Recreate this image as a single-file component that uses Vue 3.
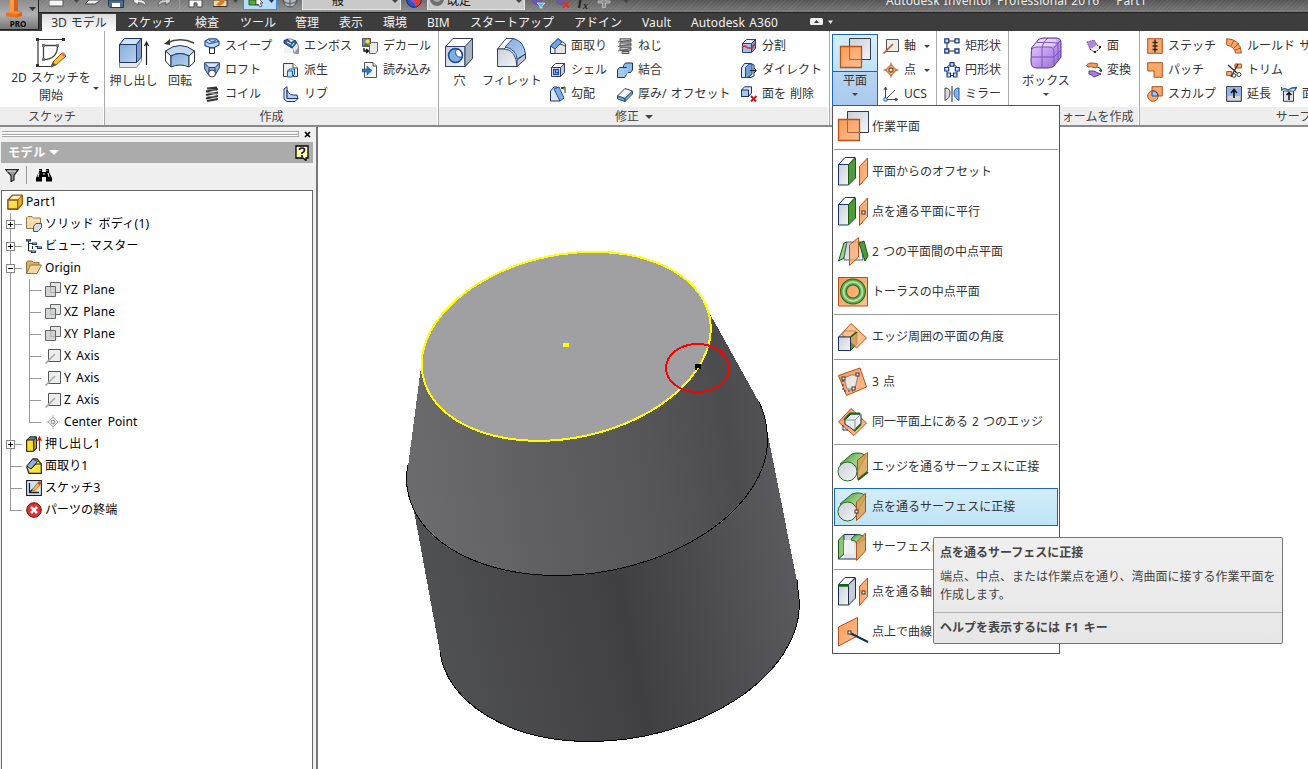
<script setup>
const O = 'fill="#fba96b" stroke="#b5521b"'
const N = 'stroke="#1d3566"'
const cube = (front, top, side, stroke) => `<g stroke="${stroke}" stroke-linejoin="round"><path d="M1.5 5.500H10.500V14.500H1.500Z" fill="${front}"/><path d="M1.500 5.500L5.500 1.500H14.500L10.500 5.500Z" fill="${top}"/><path d="M10.500 5.500L14.500 1.500V10.500L10.500 14.500Z" fill="${side}"/></g>`
const planeSmall = `<path d="M5.500.5h10v10h-10z" fill="#e4e5e6" stroke="#666"/><path d="M.5 4.500h10v10H.5z" fill="#c9cacb" fill-opacity=".8" stroke="#666"/>`
const axis = (c) => `<path d="M3.500 1.500h12v12h-12z" fill="#eceded" stroke="#555"/><path d="M.5 15.500L10 6" stroke="${c}" stroke-width="1.600"/>`
const bigPlane = `<path d="M10.500.5h21v21h-21z" fill="url(#gGray)" stroke="#333a4a"/><path d="M1.500 8.500h21v21h-21z" fill="url(#gOr)" stroke="#b5521b" stroke-width="1.300"/><path d="M10.500 9v12.500H22" fill="none" stroke="#b0623a"/>`
const box3 = (side) => `<path d="M1.500 8.500L8 1.500H18L11.500 8.500Z" fill="#fff" ${N}/><path d="M1.500 8.500h10v20.500h-10z" fill="url(#gGray)" ${N}/><path d="M11.500 8.500L18.500 2V22L11.500 29Z" fill="${side}" stroke="#1a5a12"/>`
const slab = `<path d="M22.500 10.500L30.500 2V20.500L22.500 29.500Z" fill="url(#gOr)" stroke="#b5521b"/>`
const dot = (x, y) => `<rect x="${x}" y="${y}" width="3" height="3" fill="#fff" stroke="#333"/>`
const cyl = `<path d="M3 13L15 3Q23 0 29 5L18 25Z" fill="url(#gGreen)" stroke="#1a6a12"/><circle cx="10.500" cy="20.500" r="9.500" fill="url(#gGray)" stroke="#2a6a20"/>`

const icons = {
  sketch: `<path d="M3 3V29M2 2.500H29M3 29.500H17" fill="none" stroke="#333" stroke-width="1.200"/><g fill="#333"><path d="M1 1h3v3H1zM27 1h3v3h-3zM1 27h3v3H1z"/></g><path d="M8.500 8.500h14M8.500 8.500v14c9 0 14-5 14-14" fill="none" stroke="#444" stroke-width="1.300"/><g fill="#777"><path d="M7 7h3v3H7zM21 7h3v3h-3zM7 21h3v3H7z"/></g><path d="M18 25L27 16L31 19L21 28L16 30Z" fill="#f6c23c" stroke="#8a5a10"/><path d="M16 30l2-5 3 3z" fill="#555"/><path d="M26 17l2-2 3 3-2 2z" fill="#e66"/>`,
  extrude: `<path d="M1.500 7.500L6.500 1.500H23.500V24L18.500 30.500H1.500Z" fill="#e6e8ea" stroke="#8a909c"/><path d="M1.500 7.500H18.500V25.500H1.500Z" fill="url(#gBlue)" ${N}/><path d="M1.500 7.500L6.500 1.500H23.500L18.500 7.500Z" fill="#d3e3f6" ${N}/><path d="M18.500 7.500L23.500 1.500V20L18.500 25.500Z" fill="#7f9fcb" ${N}/><path d="M28.500 28V6M26.500 9L28.500 5L30.500 9" fill="none" stroke="#222" stroke-width="1.200"/>`,
  revolve: `<path d="M1.500 14Q16 3 30.500 14L25 19Q16 14 7 19Z" fill="#c3d8f0" ${N}/><path d="M1.500 14L7 19V30L1.500 24Z" fill="#fff" stroke="#333"/><path d="M7 19Q16 14 25 19V30Q16 26 7 30Z" fill="url(#gBlue)" ${N}/><path d="M25 19L30.500 14V25L25 30Z" fill="#fff" stroke="#333"/><path d="M3 6Q16-.5 30 6" fill="none" stroke="#444" stroke-width="1.600"/><path d="M0 7l6-5v6z" fill="#333"/>`,
  sweep: `<path d="M1 6V3L5 .8H12L15 3.500V7L9.500 10L6 9.500L1 7.500Z" fill="#c3d9f2" stroke="#1c4b98" stroke-width="1.200"/><path d="M1.500 3.500Q5 7 9 5L14.500 3.500M5 2L8 4L12 2.500" fill="none" stroke="#1c4b98"/><path d="M5.500 10h5v5.500h-5z" fill="#fff" stroke="#223"/>`,
  loft: `<path d="M.7.7h14.600v5L11 13.500H5L.7 7Z" fill="#8eb3df" ${N}/><path d="M1 1.500l4 4h6l4-4" fill="#d8e6f5" ${N}/><path d="M5 6v4M11 6v4" ${N}/><circle cx="8" cy="11.500" r="3.500" fill="#fff" stroke="#334"/>`,
  coil: `<path d="M3 2.500l10-1M2 5.500l12-2.500M2 9l12-2.500M2 12.500l12-2.500M3 15l11-2" stroke="#333" stroke-width="1.800"/><path d="M3 3l10 1.500M3 6.500l10 1.500M3 10l10 1.500" stroke="#888"/>`,
  emboss: `<path d="M3 1H8Q15 3 15.500 9V15.500L11 15Q10 8 3 6Z" fill="#e7e9ec" stroke="#888"/><path d="M10 15Q11 9 4 7H1V15.500z" fill="#f1f2f4"/><path d="M1 2.500L5 1.500L8 5L12 2L13.500 5L9 10L1 5Z" fill="#2c6cb8" ${N}/><path d="M4 4l4 2M11 5L9 8" stroke="#fff"/><path d="M15.500 9v6.500H11z" fill="#8b97aa"/>`,
  derive: `<path d="M.5 14.500V1.500H10L14.500 6V14.500Z" fill="#eee" stroke="#444"/><path d="M10 1.500V6h4.500" fill="#fff" stroke="#444"/><path d="M4.500 9L6.500 7H11.500V12L9.500 15H4.500Z" fill="#bfe0fa" stroke="#1c5ea8"/><path d="M4.500 9h5v5" fill="none" stroke="#1c5ea8"/>`,
  rib: `<path d="M1 3L4 .7V12L15 12.500L12 15.500H4L1 13Z" fill="#d7e5f5" ${N}/><path d="M4 4Q6 10 14 9L15 12.500H4Z" fill="#b5d1ef" ${N}/>`,
  decal: `<path d="M.5.5h8v8h-8z" fill="#6d8db0" stroke="#555"/><circle cx="5.500" cy="3.500" r="2" fill="#ffe33a"/><path d="M1 8l3-3 4 3z" fill="#4d7a36"/><path d="M7.500 6.500L9.500 4.500H15.500V13L13.500 15.500H7.500Z" fill="#e8e8e8" stroke="#666"/><path d="M2 10v3h4M4 11l2.500 2L4 15" fill="none" stroke="#111" stroke-width="1.400"/>`,
  import: `<path d="M2.500.5H11L14.500 4V15.500H2.500Z" fill="#f7f7f7" stroke="#555"/><path d="M11 .5V4h3.500" fill="#ddd" stroke="#555"/><path d="M0 7h5V4l5 4.500L5 13v-3H0z" fill="#2379c8" stroke="#124b88" stroke-width=".5"/>`,
  hole: `<path d="M1.500 9.500L9 1.500H28.500V21.500L21 29.500H1.500Z" fill="#fff" stroke="#334060"/><path d="M1.500 9.500H21V29.500H1.500Z" fill="url(#gGray)" stroke="#334060"/><path d="M21 9.500L28.500 1.500V21.500L21 29.500Z" fill="#a9b2c0" stroke="#334060"/><circle cx="11.500" cy="18.500" r="7" fill="#7eaee4"/><path d="M12.500 11.500Q9 20 18 20.500A7 7 0 0 0 12.500 11.500Z" fill="#fff" stroke="#1c4b98"/><circle cx="11.500" cy="18.500" r="7" fill="none" stroke="#1c4b98" stroke-width="1.500"/>`,
  fillet: `<path d="M1.500 12L10 1.500H18L8 12Z" fill="#fff" stroke="#334060"/><path d="M1.500 12H9Q20 13 21 29.500H1.500Z" fill="url(#gGray)" stroke="#334060"/><path d="M9 10L17 1.500Q28 4 29.500 17L21 22Q20 12 9 10Z" fill="url(#gBlue)" stroke="#1c4b98"/><path d="M21 23L29.500 17V22L21 29.500Z" fill="#c2c8d2" stroke="#334060"/>`,
  chamfer: `<path d="M.5 8L8 .8L15.500 6V15.500H.5Z" fill="#f5f6f8" ${N}/><path d="M.5 8L8 .8L12 4L5 11Z" fill="#75a7df" stroke="#1c4b98"/><path d="M5 11L10 6L15.500 8V15.500H5Z" fill="#e4e6e9" stroke="#445"/>`,
  shell: cube('#f2f3f5', '#fff', '#c5cad3', '#334060') + `<path d="M3.500 7.500h5v5h-5zM5.500 7.500v3h3" fill="#cfe0f4" stroke="#1c4bb0" stroke-width="1.300"/>`,
  draft: `<path d="M.5 5L4 1H7L10 15H.5Z" fill="#e2e4e8" ${N}/><path d="M4 3L9 1L14 12L10 15Z" fill="#7fb0e4" stroke="#1c4b98"/><path d="M15 1v6M11 2l4-1M11 2l3 1" stroke="#222" fill="none"/>`,
  thread: `<path d="M3 .8h11v3H3zM3 5h11v3H3zM3 9.300h11v3H3zM5 13.500h7v2H5z" fill="#c8ccd0" stroke="#555"/><path d="M1 4l13-2M1 8.500L14 6M1 13l13-2.500" stroke="#555"/>`,
  combine: `<path d="M6.500 3.500L8.500 1H15.500V8L13.500 10.500H6.500Z" fill="#8db9e9" ${N}/><path d="M.5 8L2.500 5.500H9.500V12.500L7.500 15.500H.5Z" fill="#a8c9ee" ${N}/><path d="M7 6h4v6H7z" fill="#9bc2ec"/>`,
  thicken: `<path d="M.5 10L8 2.500L15.500 5L8 12.500Z" fill="#f4f5f6" stroke="#333"/><path d="M.5 10L8 12.500V15.500L.5 13ZM8 12.500L15.500 5V8L8 15.500Z" fill="#6dade2" stroke="#284d80"/>`,
  split: cube('#9ec3ea', '#e9f1fa', '#6e9bd2', '#334060') + `<path d="M1 9l3-1 3 2 4 0 2-3 2-1" fill="none" stroke="#d22" stroke-width="1.500"/>`,
  direct: `<path d="M.5 6L3.500 1.500H10L13 3V14L10 15.500H.5Z" fill="#dbe8f6" ${N}/><path d="M4.500 5.500L8 2H11V12L7 15.500H4.500Z" fill="#709fd8" stroke="#1c4b98"/><path d="M9 8.500h6M13 6l2.500 2.500L13 11" fill="none" stroke="#222"/>`,
  delface: `<path d="M.5 4L3.500 .8H10.500V7L7.500 10.500H.5Z" fill="#d5e5f6" ${N}/><path d="M.5 4h7v6.500h-7z" fill="#a9c8eb" ${N}/><path d="M10 10l5 5.500M15.500 10L10 15.500" stroke="#c11a1a" stroke-width="2"/>`,
  planeBig: bigPlane,
  axisO: axis('#c35a22'),
  pointO: `<path d="M8 .5V15.500M.5 8H15.500" stroke="#9a4b20"/><path d="M8 2.500L13.500 8L8 13.500L2.500 8Z" fill="#fcb377" stroke="#9a4b20"/><circle cx="8" cy="8" r="2" fill="#fff" stroke="#9a4b20" stroke-width="1.300"/>`,
  ucs: `<path d="M2.500 14V2M1 4l1.500-3L4 4M2.500 13.500H14M12 12l3 1.500L12 15M2.500 13.500L12 4" fill="none" stroke="#444"/><path d="M1 12h3v3H1z" fill="#fff" stroke="#1b6ac0"/>`,
  rect: `<path d="M3 3h10M3 3v10h10" fill="none" stroke="#223"/><g fill="#cfe2f7" stroke="#1c3f80" stroke-width="1.300"><path d="M.8.8h4v4h-4zM11 .8h4v4h-4zM.8 11h4v4h-4zM11 11h4v4h-4z"/></g>`,
  circ: `<circle cx="8" cy="8" r="5.500" fill="none" stroke="#333"/><g fill="#cfe2f7" stroke="#1c3f80" stroke-width="1.200"><path d="M6 .7h4v3.500H6zM.7 5.500h4V9h-4zM11.300 5.500h4V9h-4zM3 11h3.500v4H3zM9.500 11h3.500v4H9.500z"/></g>`,
  mirror: `<path d="M1 2q5 0 5 5T1 14.500z" fill="#d7dadf" stroke="#445"/><path d="M15 2q-5 0-5 5t5 7.500z" fill="#84b6ea" stroke="#1c5ba5"/><path d="M8 0v16" stroke="#222"/>`,
  freebox: `<path d="M1.500 11L8 3Q10 1 14 1H26Q31 1 31 6V20L24 29Q22 31 18 31H7Q1 31 1 25Z" fill="url(#gViolet)" stroke="#54348e"/><path d="M3 10L9 3Q12 2 16 2H26Q28 3 25 8Q22 10 18 10Z" fill="#fff" opacity=".45"/><path d="M1.500 14Q2 10 7 10H19Q24 10 24 15V29M24 11L30 4M12 10V31M1 20H24L31 13M12 10Q14 3 18 1M7 5.500Q18 5 28 6V23" fill="none" stroke="#7c54bb"/>`,
  fface: `<path d="M1 4L8 2L11 7L4 11Z" fill="#b18ae0" stroke="#6b45a0" stroke-dasharray="1.500 1"/><path d="M4 11L9 15L15 9L11 7" fill="#eee" stroke="#333" stroke-dasharray="2 1"/><path d="M13 8h2v2h-2zM8 13h2v2H8z" fill="#222"/>`,
  convert: `<path d="M.5 3Q4-.5 12 2L10 6Q5 4 2 5Z" fill="#f59a5d" stroke="#a4511f"/><path d="M3 9Q8 8 12 11L15 12L8 15Q5 12 3 12Z" fill="#a97edb" stroke="#5e3c94"/><path d="M11 5q4 0 4 4M13 8l2 2 1-3" fill="none" stroke="#333"/>`,
  stitch: `<path d="M.7.7h14.600v14.600H.7z" ${O}/><path d="M8 1.500v13M5.500 4.500h5M5.500 8h5M5.500 11.500h5" stroke="#222" stroke-width="1.300"/>`,
  patch: `<path d="M.7.7h14.600v14.600H7V9H.7z" ${O}/>`,
  sculpt: `<path d="M5 .7h10.300V10H5z" ${O}/><circle cx="6" cy="10" r="5.300" ${O}/><path d="M5 5h2q4 1 4 5H5z" fill="#a6c7ed" stroke="#1c4b98"/>`,
  ruled: `<path d="M.7.7Q14 1 15.500 15H9.500Q9 9 .7 7Z" ${O}/><path d="M5 8L8 2M8 10l5-5M9 12l6-2" stroke="#b5521b"/>`,
  trim: `<path d="M.7 9.500h5v4h-5zM9 2h6.500v4H9z" ${O}/><path d="M2 3l9 8M5 15L12 2" stroke="#333" stroke-width="1.400"/><circle cx="13" cy="12.500" r="2" fill="#fff" stroke="#333"/><circle cx="8" cy="13.500" r="1.800" fill="#fff" stroke="#333"/>`,
  extend: `<path d="M.7.7h14.600v14.600H.7z" fill="#d3d6da" stroke="#223"/><path d="M1.200 1.200h13.600v8.800H1.200z" fill="#8fb6e8"/><path d="M8 12V4M5 7l3-3.500L11 7" fill="none" stroke="#111" stroke-width="1.600"/>`,
  reface: `<path d="M2.500 5h10v10.300h-10z" fill="#dfe5ee" stroke="#345"/><path d="M.5 1v3L4 2.500l3 1.500 4-2 4.500-.5-2 3.500" fill="#cfe2f7" stroke="#1c5ba5" stroke-width="1.300"/><path d="M8 14V7M5.500 9L8 6.500 10.500 9" fill="none" stroke="#111" stroke-width="1.500"/>`,
  // tree
  part: `<path d="M1 6L5.500 1.200H15.200V10L10.800 15H1Z" fill="#fff6c8" stroke="#9a4a10" stroke-width="1.300" stroke-linejoin="round"/><path d="M1 6h9.800v9H1z" fill="url(#gYel)" stroke="#9a4a10" stroke-width="1.300"/><path d="M10.800 6l4.400-4.800V10L10.800 15z" fill="#e8b41c" stroke="#9a4a10"/>`,
  bodies: `<path d="M.5 12.500V2L2 .5H6L7.500 2H14.500V12.500Z" fill="#f6d9a5" stroke="#98774a"/><path d="M1 4.500h13" stroke="#fbeac8"/><path d="M7.500 10.500L10 7.500H15.500V11.500L12 15.500H7.500Z" fill="#d6dbe8" stroke="#44506c"/>`,
  views: `<path d="M2.500 3v10h3M2.500 5.500h4M6.500 8v3M9 8.500h3v2" fill="none" stroke="#222"/><path d="M0 1h5v2.500H0zM5 12.500h5V15H5zM6 4.500h5V7H6zM11 8.500h5V11h-5z" fill="#223c58"/><path d="M1 1.500h3v1H1zM6 13h3v1H6zM7 5h3v1H7zM12 9h3v1h-3z" fill="#5a9bd8"/>`,
  folder: `<path d="M.5 13.500V2L2 1H6L7.500 2.500H13V5" fill="#dcae66" stroke="#98713a"/><path d="M.5 13.500L4.500 5H15.500L11 13.500Z" fill="#f5d9a3" stroke="#98713a"/>`,
  plane: planeSmall,
  axis: axis('#aaa'),
  cpoint: `<path d="M8 1V15M1 8H15" stroke="#bbb"/><path d="M8 3L13 8L8 13L3 8Z" fill="#eee" stroke="#aaa"/><circle cx="8" cy="8" r="1.800" fill="#fff" stroke="#888"/>`,
  textrude: `<path d="M.7 4L4 .8H10.500V12L7.500 15.300H.7Z" fill="#5a82b4" stroke="#222"/><path d="M.7 4h7v11.300h-7z" fill="#ffdf24" stroke="#222"/><path d="M7.700 4l2.800-3V12l-2.800 3z" fill="#c99a10" stroke="#222"/><path d="M13.500 15V2M11.500 5l2-4 2 4" fill="none" stroke="#c11" stroke-width="1.200"/>`,
  tchamfer: `<path d="M.7 9L7 .8H11L15.300 6V15.300H3Z" fill="#ffe23a" stroke="#222" stroke-width="1.200"/><path d="M.7 8L7 .8L11.500 3.500L5 11Z" fill="#86b0e0" stroke="#222"/><path d="M5 11L10 6h5" fill="none" stroke="#222"/>`,
  tsketch: `<path d="M.7.7h14.600v14.600H.7z" fill="#fff" stroke="#222" stroke-width="1.300"/><path d="M1.500 1.500h13v13h-13z" fill="#d2e5f8"/><path d="M3.500 3V12.500H13M3.500 12.500L7 9" fill="none" stroke="#222" stroke-width="1.300"/><path d="M6 10L11.500 3l2.500 2L8.500 11z" fill="#f2c12e" stroke="#85601a" stroke-width=".7"/><path d="M11.500 3l1.500-2L15.500 3 14 5z" fill="#d33"/>`,
  end: `<circle cx="8" cy="8" r="7.300" fill="#e02f2f" stroke="#601010"/><path d="M5 5l6 6M11 5l-6 6" stroke="#fff" stroke-width="2.500"/>`,
  // drop-down menu
  offset: box3('#4f9a3a') + slab,
  parallel: box3('#4f9a3a') + slab + dot(25, 15),
  midplane: `<path d="M1.500 25L7 7L10 6L7 22Z" fill="#9bcf8b" stroke="#1a5a12"/><path d="M7 22L10 6H24L26 24H7Z" fill="url(#gGray)" stroke="#56607a"/><path d="M22 7L27 5L31 20L28 25Z" fill="#4f9a3a" stroke="#1a5a12"/><path d="M12.500 9L21.500 1.500V21L12.500 29.500Z" fill="#fba96b" fill-opacity=".75" stroke="#b5521b"/>`,
  torus: `<path d="M1.500 1.500h29v28.500h-29z" fill="url(#gOr)" stroke="#b5521b"/><circle cx="16" cy="15.500" r="9.500" fill="none" stroke="#256d1b" stroke-width="7"/><circle cx="16" cy="15.500" r="9.500" fill="none" stroke="#61a84d" stroke-width="5"/><circle cx="16" cy="15.500" r="9.500" fill="none" stroke="#b6dfa6" stroke-width="2"/>`,
  angle: `<path d="M1.500 16L8 10H19L13.500 16Z" fill="#fff" ${N}/><path d="M13.500 16L20 11V23L13.500 29.500Z" fill="#4f9a3a" stroke="#1a5a12"/><path d="M4.500 13L14 2.500L29.500 17L19.500 27Z" fill="#fba96b" fill-opacity=".75" stroke="#b5521b"/><path d="M1.500 16h12v13.500h-12z" fill="url(#gGray)" ${N}/><path d="M13.500 16L20 11" fill="none" stroke="#1a5a12" stroke-width="1.500"/>`,
  three: `<path d="M1.500 9.500L23 2L29.500 21L9.500 29.500Z" fill="url(#gOr)" stroke="#b5521b"/><path d="M7 12L14 9H21L18 23H10Z" fill="#eee" fill-opacity=".85" stroke="#7d8494"/><path d="M6 14v11h10" fill="none" ${N} stroke-dasharray="2 2"/>` + dot(5, 11) + dot(19, 7) + dot(15, 21),
  twoedge: `<path d="M1.500 16L14 2.500L29.500 17L17 29.500Z" fill="url(#gOr)" stroke="#b5521b"/><path d="M8 14L14 8H24V18L18 25L8 18Z" fill="#eceef0" stroke="#1d3566"/><path d="M7 14L13 7.500H23M17 25l7-7" fill="none" stroke="#116a10" stroke-width="1.800"/><path d="M8 14h10v10M18 14l6-6" fill="none" stroke="#8a93a2"/><path d="M6 19v5h5" fill="none" ${N}/>`,
  tanedge: cyl + `<path d="M20.500 9L30.500 1.500V20L20.500 28Z" fill="#d9a055" fill-opacity=".85" stroke="#b5521b"/><path d="M21 29l10-8" stroke="#116a10" stroke-width="2"/>`,
  tanpoint: cyl + `<path d="M19.500 11L28.500 2V21L19.500 29.500Z" fill="#d9a055" fill-opacity=".85" stroke="#b5521b"/>` + dot(18, 19),
  tansurf: `<path d="M7 3.500h14l7 4-8 20.500H7Z" fill="url(#gGray)"/><path d="M1.500 9L7 3.500V23L1.500 28Z" fill="#8dc47c" stroke="#1a5a12"/><path d="M1.500 28H20M7 3.500H22" fill="none" ${N}/><path d="M7 23h10V9H7z" fill="#eef0f2"/><path d="M14 9Q16 3.500 22 3.500Q27 4 28 8L20 13Q19 9 14 9Z" fill="url(#gGreen)" stroke="#2a6a20"/><path d="M19.500 11L28.500 2V20L19.500 29.500Z" fill="#d9a055" fill-opacity=".85" stroke="#b5521b"/>`,
  normaxis: `<g stroke="#1d2c50"><path d="M1.500 8.500L8 1.500H18L11.500 8.500Z" fill="#fff"/><path d="M1.500 8.500h10v20.500h-10z" fill="url(#gGray)"/><path d="M11.500 8.500L18.500 2V22L11.500 29Z" fill="#c7cdd6"/></g><path d="M1 9.500h11" stroke="#116a10" stroke-width="2.500"/>` + slab + dot(25, 15),
  normcurve: `<path d="M1.500 11L20.500 1.500V20L1.500 30Z" fill="url(#gOr)" stroke="#b5521b"/><path d="M13 17L31 26" stroke="#142f52" stroke-width="2"/>` + dot(11, 15),
  // quick access bar
  qnew: `<path d="M0 0h14v6H0z" fill="#f4f4f4" stroke="#555"/>`,
  qarrow: `<path d="M0 0h5L2.500 3z" fill="#444"/>`,
  qopen: `<path d="M1 4L5 0h12l-6 4z" fill="#e9edf2" stroke="#444"/>`,
  qsave: `<path d="M.5 0h15v7.500H2L.5 6z" fill="#516b8c" stroke="#27384e"/><path d="M4 3h8v4H4z" fill="#fff"/>`,
  qundo: `<path d="M0 1L5-3V0Q13-1 13 6Q10 2 5 2.500V5z" fill="#f2f2f2" stroke="#444" stroke-width=".6"/>`,
  qredo: `<path d="M14 1L9-3V0Q1-1 1 6Q4 2 9 2.500V5z" fill="#d2d2d2" stroke="#444" stroke-width=".6"/>`,
  qsep: `<path d="M.5 0v11" stroke="#9b9b9b"/>`,
  qhome: `<path d="M1 0h13v7H9V3H6v4H1z" fill="#fff" stroke="#4a4a4a"/>`,
  qpic: `<path d="M0 0h14v6.500H0z" fill="#f5d893" stroke="#333"/><path d="M3 5l6-6 3 3-5 4z" fill="#df7a20"/>`,
  qglobe: `<circle cx="8" cy="0" r="7" fill="#b4b9bd" stroke="#555"/><path d="M1 1q7 5 14 0M8-6v13M3 4q-4-5 2-8M13 4q4-5-2-8" fill="none" stroke="#555"/>`,
  qwheel: `<path d="M.5 0a7.500 7.500 0 0 0 9 7.300L8-1z" fill="#2458d0"/><path d="M8-1l2 8.200A7.500 7.500 0 0 0 15.500 0z" fill="#e13c34"/><path d="M4 0l4-1 2 6z" fill="#b04a9a"/><path d="M.7 0a7.300 7.300 0 0 0 14.600 0" fill="none" stroke="#2a1d60"/>`,
  qsphere: `<path d="M1-1a7 7 0 0 0 14 0z" fill="#6d6d6d"/><path d="M4 0q4 4 8 0z" fill="#aaa"/>`,
  qadj: `<path d="M1 0a7 7 0 0 0 12 3l-5-4z" fill="#6a55b8"/><path d="M7 3h8l-3 3v2h-2V6z" fill="#3fc0e8" stroke="#fff" stroke-width=".6"/>`,
  qclr: `<path d="M1 0a7 7 0 0 0 12 3l-5-4z" fill="#6a5a98"/><path d="M9 2l6 5.500M15 2L9 7.500" stroke="#e03030" stroke-width="2"/>`,
  qplus: `<path d="M5.500-3v4H1v2h4.500v4.500h3V3H13V1H8.500v-4z" fill="#8a8a8a" stroke="#b8b8b8"/>`,
}

const quick = [
  ['qnew', 25], ['qarrow', 10], ['qopen', 24], ['qsave', 25], ['qundo', 24], ['qredo', 22], ['qsep', 9], ['qhome', 25], ['qpic', 20], ['qarrow', 10],
]
const tabs = [
  ['スケッチ', 68], ['検査', 45], ['ツール', 55], ['管理', 44], ['表示', 44], ['環境', 44], ['BIM', 43], ['スタートアップ', 104], ['アドイン', 68], ['Vault', 49], ['Autodesk A360', 119],
]
const big = (w, icon, lines, extra = {}) => ({ big: true, w, icon, lines, ...extra })
const col = (w, ...rows) => ({ w, rows })
const panels = [
  { w: 105, title: 'スケッチ', blocks: [big(102, 'sketch', ['2D スケッチを', '開始'], { tall: true })] },
  { w: 334, title: '作成', blocks: [big(57, 'extrude', ['押し出し']), big(36, 'revolve', ['回転']), col(79, ['sweep', 'スイープ'], ['loft', 'ロフト'], ['coil', 'コイル']), col(79, ['emboss', 'エンボス'], ['derive', '派生'], ['rib', 'リブ']), col(76, ['decal', 'デカール'], ['import', '読み込み'])] },
  { w: 391, title: '修正', more: true, blocks: [big(41, 'hole', ['穴']), big(64, 'fillet', ['フィレット']), col(67, ['chamfer', '面取り'], ['shell', 'シェル'], ['draft', '勾配']), col(124, ['thread', 'ねじ'], ['combine', '結合'], ['thicken', '厚み/ オフセット']), col(85, ['split', '分割'], ['direct', 'ダイレクト'], ['delface', '面を 削除'])] },
  { w: 107, title: '作業フィーチャ', blocks: [{ plane: true, w: 53 }, col(52, ['axisO', '軸', 1], ['pointO', '点', 1], ['ucs', 'UCS'])] },
  { w: 72, title: 'パターン', blocks: [col(64, ['rect', '矩形状'], ['circ', '円形状'], ['mirror', 'ミラー'])] },
  { w: 131, title: 'フリーフォームを作成', blocks: [big(74, 'freebox', ['ボックス'], { arrow: true }), col(50, ['fface', '面'], ['convert', '変換'])] },
  { w: 332, title: 'サーフェス', blocks: [col(79, ['stitch', 'ステッチ'], ['patch', 'パッチ'], ['sculpt', 'スカルプ']), col(55, ['ruled', 'ルールド サーフェス'], ['trim', 'トリム'], ['extend', '延長']), col(60, null, null, ['reface', '面を置換'])] },
]

const tree = [
  { t: 'Part1', i: 'part', d: 0 },
  { t: 'ソリッド ボディ(1)', i: 'bodies', d: 1, e: '+', wide: true },
  { t: 'ビュー: マスター', i: 'views', d: 1, e: '+', wide: true },
  { t: 'Origin', i: 'folder', d: 1, e: '-' },
  { t: 'YZ Plane', i: 'plane', d: 2 },
  { t: 'XZ Plane', i: 'plane', d: 2 },
  { t: 'XY Plane', i: 'plane', d: 2 },
  { t: 'X Axis', i: 'axis', d: 2 },
  { t: 'Y Axis', i: 'axis', d: 2 },
  { t: 'Z Axis', i: 'axis', d: 2 },
  { t: 'Center Point', i: 'cpoint', d: 2, last: true },
  { t: '押し出し1', i: 'textrude', d: 1, e: '+' },
  { t: '面取り1', i: 'tchamfer', d: 1 },
  { t: 'スケッチ3', i: 'tsketch', d: 1 },
  { t: 'パーツの終端', i: 'end', d: 1, last: true },
]

const menu = [
  [['planeBig', '作業平面']],
  [['offset', '平面からのオフセット'], ['parallel', '点を通る平面に平行'], ['midplane', '2 つの平面間の中点平面'], ['torus', 'トーラスの中点平面']],
  [['angle', 'エッジ周囲の平面の角度']],
  [['three', '3 点'], ['twoedge', '同一平面上にある 2 つのエッジ']],
  [['tanedge', 'エッジを通るサーフェスに正接'], ['tanpoint', '点を通るサーフェスに正接', true], ['tansurf', 'サーフェスに正接し平面に平行']],
  [['normaxis', '点を通る軸に垂直'], ['normcurve', '点上で曲線に垂直']],
]
</script>

<template>
  <div class="app">
    <svg class="defs" width="0" height="0">
      <defs>
        <linearGradient id="gGray" x1="0" y1="0" x2="1" y2="1"><stop offset="0" stop-color="#c9cfd8" /><stop offset="1" stop-color="#f4f5f6" /></linearGradient>
        <linearGradient id="gOr" x1="0" y1="0" x2="1" y2="1"><stop offset="0" stop-color="#f99a55" /><stop offset="1" stop-color="#fdc194" /></linearGradient>
        <linearGradient id="gBlue" x1="0" y1="0" x2="1" y2="1"><stop offset="0" stop-color="#86add9" /><stop offset="1" stop-color="#b6d2f0" /></linearGradient>
        <linearGradient id="gGreen" x1="0" y1="0" x2="1" y2="1"><stop offset="0" stop-color="#3f8a2d" /><stop offset=".5" stop-color="#9fd38d" /><stop offset="1" stop-color="#4a9438" /></linearGradient>
        <linearGradient id="gYel" x1="0" y1="0" x2="1" y2="1"><stop offset="0" stop-color="#fff27a" /><stop offset="1" stop-color="#f8d51c" /></linearGradient>
        <linearGradient id="gViolet" x1="0" y1="0" x2="1" y2="1"><stop offset="0" stop-color="#e6d6fa" /><stop offset=".5" stop-color="#c39bf0" /><stop offset="1" stop-color="#8b68c8" /></linearGradient>
        <linearGradient id="cone" gradientUnits="userSpaceOnUse" x1="408" y1="440" x2="765" y2="385">
          <stop offset="0" stop-color="#6b6b6e" /><stop offset=".35" stop-color="#5f5f61" /><stop offset=".65" stop-color="#565658" /><stop offset=".88" stop-color="#4c4c4e" /><stop offset="1" stop-color="#525255" />
        </linearGradient>
        <linearGradient id="body" gradientUnits="userSpaceOnUse" x1="420" y1="620" x2="795" y2="542">
          <stop offset="0" stop-color="#515254" /><stop offset=".3" stop-color="#47474a" /><stop offset=".53" stop-color="#404042" /><stop offset=".8" stop-color="#4f4f53" /><stop offset="1" stop-color="#5a5a60" />
        </linearGradient>
      </defs>
    </svg>

    <header class="titlebar">
      <div class="quick">
        <div v-for="(q, n) in quick" :key="n" class="slot" :style="{ width: q[1] + 'px' }">
          <svg width="16" height="12" viewBox="0 0 16 12" v-html="icons[q[0]]"></svg>
        </div>
        <div class="select">
          <svg width="34" height="10" viewBox="0 0 34 10"><path d="M5 0h10v5H5z" fill="#59a643" stroke="#27641c" /><path d="M12 0v5l2-1 2 3 2-1-2-3h3L13-3z" fill="#fff" stroke="#222" stroke-width=".7" /><path d="M25 0h5l-2.500 3z" fill="#335" /></svg>
        </div>
        <svg class="globe" width="16" height="12" viewBox="0 0 16 12" v-html="icons.qglobe"></svg>
        <div class="combo first"><span>一般</span><i class="tri dark"></i></div>
        <svg class="wheel" width="16" height="12" viewBox="0 0 16 12" v-html="icons.qwheel"></svg>
        <div class="combo"><svg width="16" height="10" viewBox="0 0 16 10" v-html="icons.qsphere"></svg><span>既定</span><i class="tri dark"></i></div>
        <svg class="adj" width="16" height="12" viewBox="0 0 16 12" v-html="icons.qadj"></svg>
        <svg class="adj" width="16" height="12" viewBox="0 0 16 12" v-html="icons.qclr"></svg>
        <em class="fx">f<sub>x</sub></em>
        <svg class="plus" width="14" height="12" viewBox="0 0 14 12" v-html="icons.qplus"></svg>
        <i class="tri dark"></i>
      </div>
      <div class="title"><span class="product">Autodesk Inventor Professional 2016</span><span>Part1</span></div>
    </header>

    <nav class="tabs">
      <div class="tab active">3D モデル</div>
      <div v-for="t in tabs" :key="t[0]" class="tab" :style="{ width: t[1] + 'px' }">{{ t[0] }}</div>
      <svg class="mini" width="24" height="10" viewBox="0 0 24 10"><rect y="1" width="13" height="7" rx="1.500" fill="#eee" /><path d="M4 6h5L6.500 3z" fill="#333" /><path d="M18 3.500h5L20.500 7z" fill="#eee" /></svg>
    </nav>

    <div class="appbtn">
      <svg width="38" height="20" viewBox="0 0 38 20"><path d="M10 0h8v11l4 1v4l-5 1.500L6 16v-3l4-1z" fill="#d9601a" /><path d="M10 0h4v12l-4 1z" fill="#ff9a48" /><path d="M6 13l8-2 8 1-5 2.500z" fill="#f78c38" /><path d="M6 13l11 1.500v3L6 16z" fill="#e8731c" /><path d="M29 7h7l-3.500 4z" fill="#333" /></svg>
      <b>PRO</b>
    </div>

    <section class="ribbon">
      <div v-for="p in panels" :key="p.title" class="panel" :style="{ width: p.w + 'px' }">
        <div class="pbody">
          <template v-for="(b, n) in p.blocks" :key="n">
            <div v-if="b.big" class="big" :class="{ tall: b.tall }" :style="{ width: b.w + 'px' }">
              <svg width="32" height="32" viewBox="0 0 32 32" v-html="icons[b.icon]"></svg>
              <span v-for="l in b.lines" :key="l">{{ l }}</span>
              <i v-if="b.arrow || b.tall" class="tri dark" :class="{ corner: b.tall }"></i>
            </div>
            <div v-else-if="b.plane" class="planebtn">
              <div class="ptop"><svg width="32" height="32" viewBox="0 0 32 32" v-html="icons.planeBig"></svg></div>
              <div class="pbot"><span>平面</span><i class="tri dark"></i></div>
            </div>
            <div v-else class="col" :style="{ width: b.w + 'px' }">
              <div v-for="(r, k) in b.rows" :key="k" class="row">
                <template v-if="r">
                  <svg width="16" height="16" viewBox="0 0 16 16" v-html="icons[r[0]]"></svg>
                  <span>{{ r[1] }}</span>
                  <i v-if="r[2]" class="tri dark"></i>
                </template>
              </div>
            </div>
          </template>
        </div>
        <div class="pfoot"><span>{{ p.title }}</span><i v-if="p.more" class="tri dark wide"></i></div>
      </div>
    </section>

    <main class="work">
      <aside class="browser">
        <div class="grip"><div class="bar"></div><svg width="8" height="8" viewBox="0 0 8 8"><path d="M1 1l5 5M6 1L1 6" stroke="#000" stroke-width="1.700" /></svg></div>
        <div class="bhead"><b>モデル</b><i class="tri light"></i>
          <svg width="14" height="16" viewBox="0 0 14 16"><path d="M1 1h12v12h-2v2.500L8 13H1z" fill="#ffffb0" stroke="#000" stroke-width="1.300" /><path d="M4.500 5q0-2 2.500-2t2.500 2-2.500 3v1M7 10v2" fill="none" stroke="#113" stroke-width="1.700" /></svg>
        </div>
        <div class="btools">
          <svg width="14" height="13" viewBox="0 0 14 13"><path d="M.7.7h12.600L9 6.500V11l-3 1.500v-6z" fill="#999" stroke="#222" stroke-width="1.200" /><path d="M2 2h9" stroke="#ddd" /></svg>
          <div class="vsep"></div>
          <svg width="16" height="14" viewBox="0 0 16 14"><path d="M3 1h3v3h4V1h3v3l3 6v3.500h-6V9H6v4.500H0V10l3-6z" fill="#000" /><path d="M3 5L2 9M12 5l1 4M7 6h2M4 2v1M11 2v1" stroke="#fff" /></svg>
        </div>
        <div class="tree">
          <div v-for="n in tree" :key="n.t" class="node" :class="['d' + n.d, { last: n.last, wide: n.wide }]">
            <span v-if="n.d === 2" class="trunk"></span>
            <span v-if="n.d" class="branch"></span>
            <span v-if="n.e" class="exp" :class="{ plus: n.e === '+' }"></span>
            <svg width="16" height="16" viewBox="0 0 16 16" v-html="icons[n.i]"></svg>
            <span class="label">{{ n.t }}</span>
          </div>
        </div>
      </aside>
      <div class="viewport">
        <svg width="990" height="642" viewBox="318 127 990 642" shape-rendering="crispEdges">
          <path d="M412 500L440.500 655C446 700 505 741.500 590 741.500A181.800 115.300 -10.380 0 0 799.500 604L797.500 584L767 430Z" fill="url(#body)" />
          <path d="M421.500 363L406.500 478A182.200 113.900 -9.920 0 0 557.600 575.500A182.200 113.900 -9.920 0 0 767.500 440Q767 418 759 402L710 314Z" fill="url(#cone)" />
          <path d="M407.500 465L406.500 478A182.200 113.900 -9.920 0 0 557.600 575.500A182.200 113.900 -9.920 0 0 767.500 440Q767 418 759 402M440 652C446 700 505 741.500 590 741.500A181.800 115.300 -10.380 0 0 799.500 604L797 580" fill="none" stroke="#000" />
          <ellipse cx="566.200" cy="346.300" rx="146.400" ry="91.600" transform="rotate(-11.760 566.200 346.300)" fill="#a0a0a2" stroke="#ff0" stroke-width="2" />
          <path d="M563 343h6v4h-6z" fill="#ff0" />
          <path d="M695 364h6v5h-2v-1h-2v2h-2z" fill="#000" />
          <ellipse cx="697.500" cy="368" rx="31.500" ry="24" fill="none" stroke="#f00" stroke-width="2" />
        </svg>
      </div>
    </main>

    <div class="menu">
      <div v-for="(g, n) in menu" :key="n" class="group">
        <div v-for="m in g" :key="m[0]" class="item" :class="{ hot: m[2] }">
          <svg width="32" height="32" viewBox="0 0 32 32" v-html="icons[m[0]]"></svg>
          <span>{{ m[1] }}</span>
        </div>
      </div>
    </div>

    <div class="tip">
      <div class="tbody"><b>点を通るサーフェスに正接</b><p>端点、中点、または作業点を通り、湾曲面に接する作業平面を作成します。</p></div>
      <div class="tfoot"><b>ヘルプを表示するには F1 キー</b></div>
    </div>
  </div>
</template>

<style>
body { margin: 0; overflow: hidden; }
</style>

<style scoped>
.app { position: relative; width: 1308px; height: 769px; overflow: hidden; background: #fff; display: flex; flex-direction: column; font: 12px/18px "Noto Sans", "Noto Sans CJK JP", sans-serif; word-spacing: 1px; color: #333; white-space: nowrap; box-sizing: border-box; }
.app * { box-sizing: border-box; }
svg { display: block; flex: none; overflow: hidden; }
.defs { position: absolute; }
.tri { flex: none; width: 0; height: 0; border: 3px solid transparent; border-top-color: #ddd; border-bottom: 0; }
.tri.dark { border-top-color: #444; }
.tri.wide { border-width: 4px 4px 0; margin-left: 6px; }
.tri.light { border-width: 5px 5px 0; border-top-color: #fff; margin-left: 3px; }

.titlebar { flex: none; height: 13px; overflow: hidden; display: flex; background: repeating-linear-gradient(135deg, rgba(255,255,255,.05) 0 1px, transparent 1px 3px), linear-gradient(#555, #7a7a7a); border-bottom: 1px solid #222; }
.quick { width: 886px; padding-left: 49px; display: flex; height: 12px; background: linear-gradient(90deg, rgba(255,255,255,.25), rgba(255,255,255,.12) 60%, transparent 75%); }
.select { width: 34px; height: 10px; background: #b7dcf8; border: 1px solid #3d8fdb; border-top: 0; margin-right: 5px; }
.globe { margin-right: 4px; }
.combo { width: 98px; height: 10px; background: #c9c9c9; border: 1px solid #e6e6e6; border-top: 0; display: flex; color: #111; overflow: hidden; line-height: 18px; padding-right: 2px; }
.combo.first { width: 99px; padding-left: 17px; }
.combo span { margin-top: -8px; flex: 1; }
.combo svg { margin: 0 2px 0 1px; }
.wheel { margin: 0 5px 0 5px; }
.adj { margin-left: 5px; margin-right: 3px; }
.fx { font: italic bold 15px/15px "Liberation Serif", serif; color: #222; margin: -7px 0 0 5px; width: 19px; }
.fx sub { font-size: 10px; line-height: 0; }
.plus { margin: 0 12px 0 0; }
.title { display: flex; gap: 17px; color: #ececec; line-height: 18px; margin-top: -8px; letter-spacing: .08px; }

.tabs { flex: none; height: 18px; background: #3d3d3d; padding-left: 42px; display: flex; color: #f2f2f2; line-height: 19px; }
.tab:nth-last-child(-n+3) { letter-spacing: .12px; }
.tab.active { width: 74px; height: 17px; margin: 1px 11px 0 0; line-height: 17px; background: linear-gradient(#dcdcdc, #fff); color: #333; text-align: center; letter-spacing: 0; }
.mini { margin-top: 4px; }

.appbtn { position: absolute; left: 0; top: 0; width: 39px; height: 30px; background: linear-gradient(#8c8c8c, #b0b0b0 50%, #777); border-right: 1px solid #222; border-bottom: 1px solid #222; }
.appbtn b { position: absolute; left: 0; bottom: 0; width: 36px; text-align: center; font-size: 8px; line-height: 10px; color: #000; }

.ribbon { flex: none; height: 96px; width: 1350px; display: flex; border-bottom: 2px solid #8a8a8a; background: #fff; }
.panel { flex: none; border-right: 1px solid #aaa; display: flex; flex-direction: column; height: 94px; padding-right: 1px; }
.pbody { height: 76px; display: flex; padding-top: 3px; }
.panel:nth-child(4) .pbody { padding-left: 2px; }
.panel:nth-child(5) .pbody { padding-left: 7px; }
.panel:nth-child(7) .pbody { padding-left: 7px; }
.panel:nth-child(3) .col:nth-child(3) { margin-left: 6px; }
.panel:nth-child(6) .col { margin-left: 3px; }
.panel:nth-child(2) .big + .col { margin-left: 6px; }
.pfoot { height: 18px; background: #eee; display: flex; justify-content: center; align-items: center; color: #444; padding: 1px 0 0 1px; }
.big { flex: none; display: flex; flex-direction: column; align-items: center; position: relative; padding-top: 3px; }
.big span { line-height: 20px; }
.big svg { margin-bottom: 2px; }
.big.tall span { line-height: 18px; }
.big.tall svg { margin-bottom: 0; }
.big .tri { margin-top: 2px; }
.big .tri.corner { position: absolute; right: 3px; top: 51px; }
.col { flex: none; }
.row { height: 24px; display: flex; align-items: center; }
.row span { margin-left: 5px; }
.row .tri { margin-left: 8px; }
.planebtn { width: 46px; height: 72px; margin-right: 5px; border: 1px solid #1a66bb; display: flex; flex-direction: column; }
.ptop { height: 37px; background: linear-gradient(#d7eefb, #bfe2f7); border-bottom: 1px solid #1a66bb; padding: 3px 6px; }
.pbot { flex: 1; background: linear-gradient(#b7d5f2, #aac9ee); display: flex; flex-direction: column; align-items: center; }
.pbot .tri { margin-top: 3px; }

.work { flex: 1; min-height: 0; display: flex; }
.browser { width: 318px; background: #f0f0f0; border-right: 2px solid #777; display: flex; flex-direction: column; }
.grip { height: 15px; padding: 4px 4px 0 2px; display: flex; justify-content: space-between; }
.bar { width: 297px; height: 6px; border: 1px solid #aaa; border-left: 0; background: linear-gradient(#fff 0 1px, #eee 1px 2px, #aaa 2px 3px, #fff 3px); }
.grip svg { margin-top: 0; }
.bhead { width: 312px; margin-left: 1px; height: 21px; background: #ababab; color: #fff; display: flex; align-items: center; padding: 0 4px 0 7px; }
.bhead b { letter-spacing: .6px; }
.bhead svg { margin-left: auto; }
.btools { height: 27px; display: flex; align-items: center; padding: 0 0 3px 5px; }
.vsep { width: 1px; height: 18px; background: #999; margin: 0 9px 0 7px; }
.tree { width: 312px; margin-left: 1px; flex: 1; background: #fff; border: 1px solid #666; border-bottom: 0; color: #000; }
.node { height: 22px; position: relative; display: flex; align-items: center; padding-left: 5px; letter-spacing: .1px; }
.node.wide { letter-spacing: .28px; }
.node.d1 { padding-left: 24px; }
.node.d2 { padding-left: 43px; word-spacing: 2px; }
.label { margin-left: 3px; }
.node::before { content: ""; position: absolute; left: 8px; top: 0; width: 1px; height: 22px; background: #999; }
.node.d0::before { display: none; }
.node.d2.last ~ .node.d1.last::before, .node.d1.last::before { height: 12px; }
.trunk { position: absolute; left: 27px; top: 0; width: 1px; height: 22px; background: #999; }
.last .trunk { height: 12px; }
.branch { position: absolute; left: 8px; top: 11px; width: 12px; height: 1px; background: #999; }
.d2 .branch { left: 27px; }
.exp { position: absolute; left: 4px; top: 7px; width: 9px; height: 9px; border: 1px solid #888; background: linear-gradient(#000, #000) center / 5px 1px no-repeat #fff; }
.exp.plus { background: linear-gradient(#000, #000) center / 5px 1px no-repeat, linear-gradient(#000, #000) center / 1px 5px no-repeat #fff; }
.viewport { flex: 1; overflow: hidden; background: #fff; }

.menu { position: absolute; left: 832px; top: 105px; width: 228px; height: 549px; padding: 1px 1px 0; background: #fff; border: 1px solid #555; }
.group + .group { border-top: 1px solid #999; margin-top: 2px; padding-top: 2px; }
.item { height: 40px; display: flex; align-items: center; padding: 0 0 0 2px; border: 1px solid transparent; }
.item span { margin: 0 0 0 3px; }
.item svg { margin-top: -1px; }
.item.hot { height: 38px; margin: 1px 0; border-color: #1a66bb; background: linear-gradient(#d3edfa, #bfe3f6); }

.tip { position: absolute; left: 933px; top: 537px; width: 350px; height: 107px; border: 1px solid #767676; border-radius: 2px; background: linear-gradient(#f0f0f0, #e6e6e6); color: #444; }
.tbody { height: 75px; padding: 6px 0 0 6px; border-bottom: 1px solid #b5b5b5; }
.tbody b, .tfoot b { display: block; line-height: 18px; }
.tbody p { margin: 6px 0 0; width: 338px; white-space: normal; word-break: break-all; }
.tfoot { padding: 6px; word-spacing: 2px; }
</style>
